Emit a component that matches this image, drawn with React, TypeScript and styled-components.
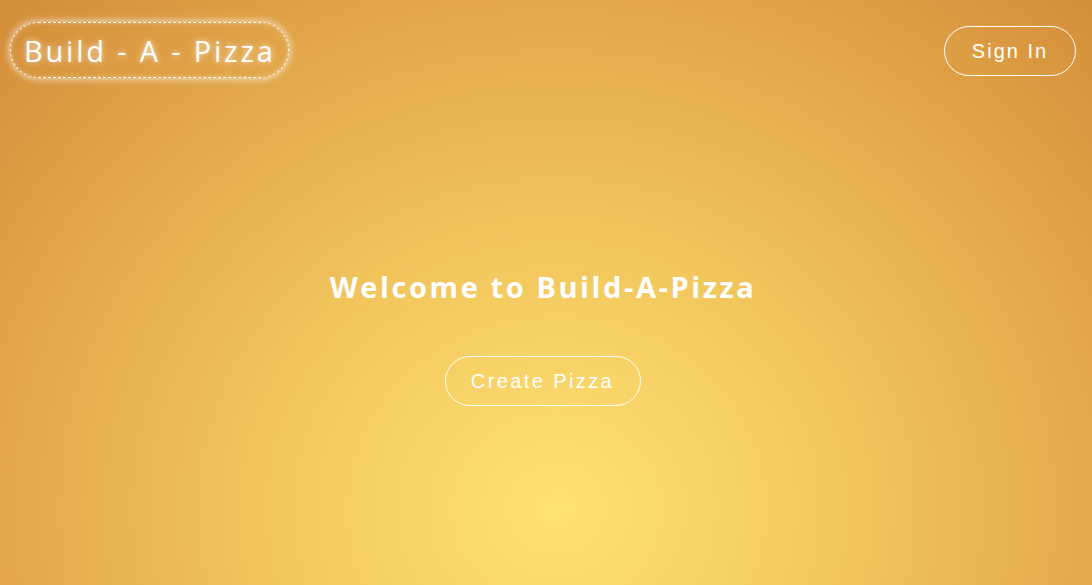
import React from "react";
import styled, { createGlobalStyle } from "styled-components";

const Global = createGlobalStyle`
  html, body { margin: 0; padding: 0; }
  body { font-family: "Liberation Sans", Arial, sans-serif; }
`;

const Page = styled.div`
  width: 1092px;
  height: 585px;
  box-sizing: border-box;
  background: radial-gradient(ellipse 760px 700px at 51% 87%, #ffe274 0%, #f3c95f 35%, #e4aa4c 70%, #d48f3a 100%);
  display: flex;
  flex-direction: column;
  overflow: hidden;
`;

const Header = styled.header`
  display: flex;
  justify-content: space-between;
  align-items: flex-start;
  padding: 22px 16px 0 10px;
`;

const Logo = styled.div`
  height: 56px;
  box-sizing: border-box;
  padding: 0 12px 0 13px;
  display: flex;
  align-items: center;
  border: 1px dashed #ffffff;
  border-radius: 28px;
  box-shadow: 0 0 6px 2px rgba(255, 255, 255, 0.55), inset 0 0 4px rgba(255, 255, 255, 0.35);
  font-family: "Open Sans", "Noto Sans", sans-serif;
  font-size: 29px;
  font-weight: 400;
  letter-spacing: 2.8px;
  color: #ffffff;
  text-shadow: 0 0 6px rgba(255, 255, 255, 0.8);
  white-space: nowrap;
`;

const OutlineButton = styled.button<{ $w: number; $ls: number }>`
  width: ${(p) => p.$w}px;
  height: 50px;
  box-sizing: border-box;
  background: transparent;
  border: 1px solid #ffffff;
  border-radius: 25px;
  color: #ffffff;
  font-family: "Liberation Sans", Arial, sans-serif;
  font-size: 20px;
  letter-spacing: ${(p) => p.$ls}px;
  padding: 0;
  cursor: pointer;
`;

const SignInWrap = styled.div`
  margin-top: 4px;
`;

const Main = styled.main`
  display: flex;
  flex-direction: column;
  align-items: center;
  padding-top: 189px;
`;

const Title = styled.h1`
  margin: 0 6px 0 0;
  font-family: "Open Sans", "Noto Sans", sans-serif;
  font-weight: 700;
  font-size: 29px;
  letter-spacing: 2.6px;
  color: #ffffff;
  line-height: 40px;
`;

const CreateWrap = styled.div`
  margin-top: 49px;
  margin-right: 7px;
`;

export default function App() {
  return (
    <>
      <Global />
      <Page>
        <Header>
          <Logo>Build - A - Pizza</Logo>
          <SignInWrap>
            <OutlineButton $w={132} $ls={2}>Sign In</OutlineButton>
          </SignInWrap>
        </Header>
        <Main>
          <Title>Welcome to Build-A-Pizza</Title>
          <CreateWrap>
            <OutlineButton $w={196} $ls={2.4}>Create Pizza</OutlineButton>
          </CreateWrap>
        </Main>
      </Page>
    </>
  );
}
